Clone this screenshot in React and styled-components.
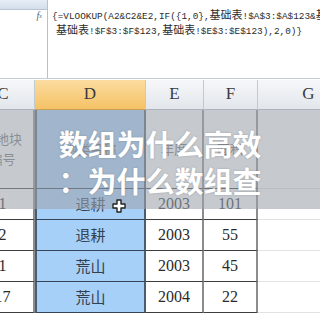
import React from "react";
import styled, { createGlobalStyle } from "styled-components";

const Global = createGlobalStyle`
  html, body { margin: 0; padding: 0; background: #fff; }
  body { width: 320px; height: 320px; overflow: hidden; }
`;

const Page = styled.div`
  position: relative;
  width: 320px;
  height: 320px;
  overflow: hidden;
  background: #fff;
`;

const FormulaBar = styled.div`
  display: flex;
  height: 78px;
  border-bottom: 1px solid #c6ccd4;
  background: #fff;
`;

const NameArea = styled.div`
  width: 47px;
  flex: none;
  border-right: 1px solid #b9c0c9;
  display: flex;
  flex-direction: column;
`;

const NameBox = styled.div`
  height: 9px;
  background: linear-gradient(#e6edf6, #d3deeb);
  border-bottom: 1px solid #b9c4d2;
`;

const FxRow = styled.div`
  display: flex;
  justify-content: flex-end;
  padding: 1px 5px 0 0;
  font-family: "Liberation Serif", serif;
  font-style: italic;
  font-size: 10px;
  line-height: 10px;
  color: #5a6470;
  sub { font-size: 6px; }
`;

const FormulaText = styled.div`
  flex: 1;
  padding: 7px 0 0 4px;
  font-family: "Liberation Mono", "Noto Sans CJK SC", monospace;
  font-size: 9.4px;
  color: #2c2c2c;
  white-space: pre;
  overflow: hidden;
`;

const FLine = styled.div`
  height: 15px;
  line-height: 15px;
  padding-left: ${(p) => p.$indent || 0}px;
`;

const Cjk = styled.span`
  font-family: "Noto Sans CJK SC", sans-serif;
  font-size: 11px;
`;

const Spacer = styled.div`
  height: 1px;
  background: #fff;
`;

const Sheet = styled.div`
  margin-left: -28px;
  display: flex;
  flex-direction: column;
`;

const Row = styled.div`
  display: flex;
  flex: none;
  height: ${(p) => p.$h}px;
`;

const cellStyles = {
  head: `
    background: linear-gradient(#f6f7f9, #e2e6eb);
    border-right: 1px solid #c3c9d1;
    border-bottom: 1px solid #aab3bf;
    font-family: "Liberation Serif", serif;
    font-size: 17px;
    color: #3a3a3a;
  `,
  headSel: `
    background: linear-gradient(#fbdca0, #f5c265);
    border-right: 1px solid #e8c488;
    border-bottom: 1px solid #c9a05a;
    font-family: "Liberation Serif", serif;
    font-size: 17px;
    color: #3a3a3a;
  `,
  data: `
    background: #fff;
    border-right: 2px solid #8c8c8c;
    border-bottom: 1px solid #3d3d3d;
    font-family: "Liberation Serif", "Noto Sans CJK SC", serif;
    font-size: 16px;
    color: #2a2a2a;
  `,
  sel: `
    background: #a7d0f8;
    border-left: 2px solid #4b5d72;
    border-right: 2px solid #4b5d72;
    border-bottom: 1px solid #34445a;
    font-family: "Noto Sans CJK SC", sans-serif;
    font-size: 15px;
    color: #34404e;
  `,
  grid: `
    background: #fff;
    border-bottom: 1px solid #e2e2e2;
  `,
};

const Cell = styled.div`
  box-sizing: border-box;
  width: ${(p) => p.$w}px;
  flex: none;
  display: flex;
  align-items: center;
  justify-content: center;
  text-align: center;
  overflow: hidden;
  white-space: pre;
  line-height: 1.3;
  ${(p) => cellStyles[p.$kind]}
`;

const Faint = styled.span`
  font-family: "Noto Sans CJK SC", sans-serif;
  font-size: 13px;
  color: #6e6e6e;
  line-height: 20px;
`;

const Overlay = styled.div`
  position: absolute;
  left: 0;
  right: 0;
  top: 110px;
  height: 99px;
  background: rgba(156, 164, 173, 0.58);
  padding-top: 15px;
  box-sizing: border-box;
  display: flex;
  flex-direction: column;
  align-items: center;
`;

const Title = styled.div`
  font-family: "Noto Sans CJK SC", sans-serif;
  font-weight: 700;
  font-size: 29px;
  line-height: 37px;
  color: #fff;
  text-align: center;
  text-shadow: 0 0 2px rgba(60, 70, 80, 0.35);
`;

const Cursor = styled.svg`
  position: absolute;
  left: 112px;
  top: 199px;
`;

const W = { c: 63, d: 111, e: 58, f: 54, g: 102 };

const rows = [
  { n: "2", d: "退耕", e: "2003", f: "55" },
  { n: "1", d: "荒山", e: "2003", f: "45" },
  { n: "17", d: "荒山", e: "2004", f: "22" },
];

function DataRow({ r }) {
  return (
    <Row $h={31}>
      <Cell $w={W.c} $kind="data">{r.n}</Cell>
      <Cell $w={W.d} $kind="sel">{r.d}</Cell>
      <Cell $w={W.e} $kind="data">{r.e}</Cell>
      <Cell $w={W.f} $kind="data">{r.f}</Cell>
      <Cell $w={W.g} $kind="grid" />
    </Row>
  );
}

export default function App() {
  return (
    <Page>
      <Global />
      <FormulaBar>
        <NameArea>
          <NameBox />
          <FxRow>
            f<sub>x</sub>
          </FxRow>
        </NameArea>
        <FormulaText>
          <FLine>
            {"{=VLOOKUP(A2&C2&E2,IF({1,0},"}
            <Cjk>基础表</Cjk>
            {"!$A$3:$A$123&"}
            <Cjk>基础表</Cjk>
          </FLine>
          <FLine $indent={4}>
            <Cjk>基础表</Cjk>
            {"!$F$3:$F$123,"}
            <Cjk>基础表</Cjk>
            {"!$E$3:$E$123),2,0)}"}
          </FLine>
        </FormulaText>
      </FormulaBar>
      <Spacer />
      <Sheet>
        <Row $h={30}>
          <Cell $w={W.c} $kind="head">C</Cell>
          <Cell $w={W.d} $kind="headSel">D</Cell>
          <Cell $w={W.e} $kind="head">E</Cell>
          <Cell $w={W.f} $kind="head">F</Cell>
          <Cell $w={W.g} $kind="head">G</Cell>
        </Row>
        <Row $h={79}>
          <Cell $w={W.c} $kind="data">
            <Faint>{"宗地块\n编号"}</Faint>
          </Cell>
          <Cell $w={W.d} $kind="sel">
            <Faint>地类名称</Faint>
          </Cell>
          <Cell $w={W.e} $kind="data">
            <Faint>年度</Faint>
          </Cell>
          <Cell $w={W.f} $kind="data">
            <Faint>面积</Faint>
          </Cell>
          <Cell $w={W.g} $kind="grid" />
        </Row>
        <Row $h={31}>
          <Cell $w={W.c} $kind="data">1</Cell>
          <Cell $w={W.d} $kind="sel">退耕</Cell>
          <Cell $w={W.e} $kind="data">2003</Cell>
          <Cell $w={W.f} $kind="data">101</Cell>
          <Cell $w={W.g} $kind="grid" />
        </Row>
        {rows.map((r, i) => (
          <DataRow key={i} r={r} />
        ))}
      </Sheet>
      <Overlay>
        <Title>数组为什么高效</Title>
        <Title>：为什么数组查</Title>
      </Overlay>
      <Cursor width="14" height="14" viewBox="0 0 14 14">
        <path
          d="M5 1 H9 V5 H13 V9 H9 V13 H5 V9 H1 V5 H5 Z"
          fill="#fff"
          stroke="#222"
          strokeWidth="1.4"
          strokeLinejoin="round"
        />
      </Cursor>
    </Page>
  );
}
